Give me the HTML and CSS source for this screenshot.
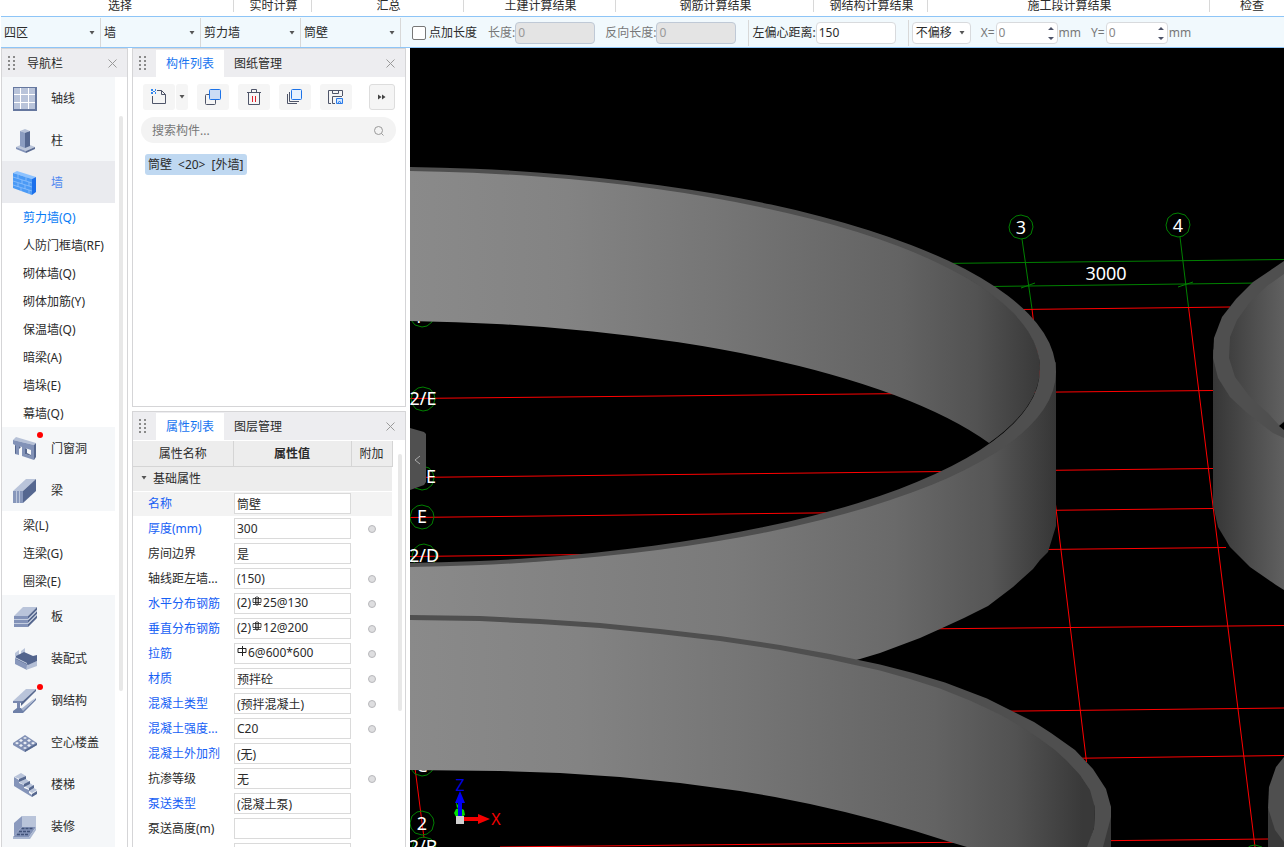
FILE: index.html
```html
<!DOCTYPE html>
<html lang="zh-CN">
<head>
<meta charset="utf-8">
<title>土建计量</title>
<link rel="stylesheet" href="styles.css">
</head>
<body>
<svg class="defs" aria-hidden="true">
  <symbol id="grip" viewBox="0 0 8 15"><path fill="#8a8a8a" d="M0 0h2v2H0zM5 0h2v2H5zM0 4h2v2H0zM5 4h2v2H5zM0 8h2v2H0zM5 8h2v2H5zM0 12h2v2H0zM5 12h2v2H5z"/></symbol>
  <symbol id="close" viewBox="0 0 9 9"><path d="M.5.5l8 8M8.500.5l-8 8" stroke="#999" fill="none"/></symbol>
  <symbol id="caret" viewBox="0 0 6 4"><path fill="#555" d="M.5 0h5L3 3.500z"/></symbol>
  <symbol id="spin" viewBox="0 0 6 14"><path fill="#4c5268" d="M0 4h6L3 1zM0 11h6l-3 3z"/></symbol>
  <symbol id="rebar" viewBox="0 0 10 10"><path d="M1 2.500h8v4H1zM1 8.500h8M3.500 1v7M6.500 1v7M5 0v10" stroke="#222" stroke-width=".8" fill="none"/></symbol>
  <symbol id="stirrup" viewBox="0 0 10 10"><path d="M1 2.500h8v4H1zM5.500 0v10" stroke="#222" fill="none"/></symbol>
</svg>

<header class="ribbon">
  <span>选择</span><span>实时计算</span><span>汇总</span><span>土建计算结果</span><span>钢筋计算结果</span><span>钢结构计算结果</span><span>施工段计算结果</span><span>检查</span>
</header>

<form class="options">
  <label class="pick"><select aria-label="楼层"><option>四区</option></select><svg><use href="#caret"/></svg></label>
  <label class="pick"><select aria-label="构件大类"><option>墙</option></select><svg><use href="#caret"/></svg></label>
  <label class="pick"><select aria-label="构件类型"><option>剪力墙</option></select><svg><use href="#caret"/></svg></label>
  <label class="pick"><select aria-label="构件"><option>筒壁</option></select><svg><use href="#caret"/></svg></label>
  <label class="check"><input type="checkbox">点加长度</label>
  <label class="field muted">长度:<input type="text" value="0" disabled></label>
  <label class="field muted">反向长度:<input type="text" value="0" disabled></label>
  <label class="field split">左偏心距离:<input type="text" value="150"></label>
  <div class="split shift"><label class="pick boxed"><select aria-label="偏移方式"><option>不偏移</option></select><svg><use href="#caret"/></svg></label></div>
  <label class="field num muted">X=<span class="spinner"><input type="number" value="0"><svg><use href="#spin"/></svg></span>mm</label>
  <label class="field num muted">Y=<span class="spinner"><input type="number" value="0"><svg><use href="#spin"/></svg></span>mm</label>
</form>

<main class="work">
  <aside class="panel nav">
    <div class="panel-head"><svg class="grip"><use href="#grip"/></svg><h2>导航栏</h2><button class="close" aria-label="关闭导航栏"><svg><use href="#close"/></svg></button></div>
    <div class="nav-body">
      <nav class="nav-list">
        <a class="group" href="#"><svg viewBox="0 0 24 24"><path fill="#65779f" d="M0 0h24v24H0z"/><path fill="#b9c4da" d="M1 1h21v21H1z"/><path d="M7.500 1v21M15.500 1v21M1 7.500h21M1 15.500h21" stroke="#fff"/></svg>轴线</a>
        <a class="group" href="#"><svg viewBox="0 0 24 24"><path fill="#bcc6da" d="M3 18l9-4 10 4-9 4z"/><path fill="#8494b9" d="M3 18l10 4v2L3 20z"/><path fill="#5b6c93" d="M13 22l9-4v2l-9 4z"/><path fill="#8c9dc1" d="M7 2l5 1v16l-5-2z"/><path fill="#566890" d="M12 3l5-1v15l-5 2z"/><path fill="#b7c2d8" d="M7 2l5-2 5 2-5 2z"/></svg>柱</a>
        <a class="group active" href="#"><svg viewBox="0 0 24 24"><path fill="#8cc2ff" d="M0 2l4-2 19 6-4 2z"/><path fill="#4b9af5" d="M0 2l19 6v16L0 17z"/><path fill="#1c70eb" d="M19 8l4-2v15l-4 3z"/><path d="M0 6l19 6M0 10l19 6M0 14l19 6M5 4v4M13 6v4M9 9v4M16 11v4M5 12v4M12 14v4M8 17v3M16 19v4" stroke="#8fc2fd" fill="none" stroke-width=".8"/></svg>墙</a>
        <a class="sub active" href="#">剪力墙(Q)</a>
        <a class="sub" href="#">人防门框墙(RF)</a>
        <a class="sub" href="#">砌体墙(Q)</a>
        <a class="sub" href="#">砌体加筋(Y)</a>
        <a class="sub" href="#">保温墙(Q)</a>
        <a class="sub" href="#">暗梁(A)</a>
        <a class="sub" href="#">墙垛(E)</a>
        <a class="sub" href="#">幕墙(Q)</a>
        <a class="group" href="#"><svg viewBox="0 0 24 24"><path fill="#b6c1d7" d="M0 3l3-3 20 6-2 2z"/><path fill="#8292b7" fill-rule="evenodd" d="M0 3l21 5v15l-12-4v-9l-3-1v9l-4-1V8L0 7zM12 11v6l6 2v-6z"/><path fill="#56678e" d="M21 8l2-2v14l-2 3zM12 11l2 1v4l4 2v1l-6-2zM6 9l2 1-2 2zM2 8l1 1v8l-1-1z"/></svg>门窗洞<i class="dot"></i></a>
        <a class="group" href="#"><svg viewBox="0 0 24 24"><path fill="#b9c4da" d="M0 12L13 0h10L10 12z"/><path fill="#8797bb" d="M0 12h10v12H0z"/><path fill="#556790" d="M10 12L23 0v12L10 24z"/><path d="M3.500 12v12M6.500 12v12" stroke="#bac5da"/></svg>梁</a>
        <a class="sub" href="#">梁(L)</a>
        <a class="sub" href="#">连梁(G)</a>
        <a class="sub" href="#">圈梁(E)</a>
        <a class="group" href="#"><svg viewBox="0 0 24 24"><path fill="#b9c4da" d="M1 11l9-9h14l-9 9z"/><path fill="#8292b8" d="M1 11h14v3H1zM1 15h14v3H1zM1 19h14v3H1z"/><path fill="#56688f" d="M15 11l9-9v3l-9 9zM15 15l9-9v3l-9 9zM15 19l9-9v3l-9 9z"/><path d="M1 14.500h14l9-9M1 18.500h14l9-9" stroke="#c3cde0" fill="none"/></svg>板</a>
        <a class="group" href="#"><svg viewBox="0 0 24 24"><path fill="#b9c4da" d="M2 6l4-3v5l-4 2zM8 4l4-3v5l-4 2z"/><path fill="#8998bc" d="M2 10l12 5v8L2 17z"/><path fill="#b4bfd6" d="M14 18l10-4v5l-11 4z"/><path fill="#52648d" d="M3 9l8-4 9 4 4-1v6l-9 4-12-6z"/><path d="M2 10.500l12 6" stroke="#c7d0e2" fill="none"/></svg>装配式</a>
        <a class="group" href="#"><svg viewBox="0 0 24 24"><path fill="#b9c4da" d="M0 12L13 0h10L10 12z"/><path fill="#7888af" d="M0 12h10v2H7v6H4v-6H0z"/><path fill="#56688f" d="M10 12L23 0v2L8 17v-3z"/><path fill="#aab7d0" d="M8 20l14-11-12 14z"/><path fill="#6e80a8" d="M0 22l4-3h4l2 3v2H0zM10 22L23 9v2L10 24z"/></svg>钢结构<i class="dot"></i></a>
        <a class="group" href="#"><svg viewBox="0 0 24 24"><path fill="#8190b5" d="M0 12l12-8 12 8v2l-12 7-12-7z"/><path fill="#566990" d="M12 19l12-7v2l-12 7z"/><g fill="#eef1f6"><path d="M10 7l2-1 2 1-2 1zM6 9.500L8 8l2 1.500L8 11zM14 9.500L16 8l2 1.500-2 1.500zM2 12l2-1 2 1-2 1.500zM10 12l2-1.500 2 1.500-2 1.500zM18 12l2-1 2 1-2 1.500zM6 14.500L8 13l2 1.500L8 16zM14 14.500l2-1.500 2 1.500-2 1.500zM10 17l2-1 2 1-2 1z"/></g></svg>空心楼盖</a>
        <a class="group" href="#"><svg viewBox="0 0 24 24"><path fill="#8494b9" d="M1 4l5 3v3l5 2v3l5 2v3l3 2v2L1 13z"/><path fill="#b9c4da" d="M1 4l7-4 5 3-6 3zM6 9l7-3 4 3-6 3zM11 13l6-3 4 3-5 3zM16 18l5-3 3 2-5 3z"/><path fill="#56688f" d="M6 6l7-3v3L6 9zM11 11l6-3v3l-6 3zM16 15l5-3v3l-5 3zM19 21l5-3v3l-5 3z"/></svg>楼梯</a>
        <a class="group" href="#"><svg viewBox="0 0 24 24"><path fill="#8b9abe" d="M1 8l8-7v11l-8 9z"/><path fill="#b9c4da" d="M9 1h14v11H9z"/><path fill="#8292b7" d="M9 12h14l-7 10H0z"/><path d="M8.500 13.500h12M6 16.500h12M4 19.500h12" stroke="#405279" stroke-width="1.500" stroke-dasharray="3 1"/><path fill="#a9b6d0" d="M16 22l7-10v3l-6 9H0v-2z"/></svg>装修</a>
      </nav>
      <div class="thumb nav-thumb"></div>
    </div>
  </aside>

  <div class="docks">
    <section class="panel components">
      <div class="panel-head"><svg class="grip"><use href="#grip"/></svg><button class="tab on">构件列表</button><button class="tab">图纸管理</button><button class="close" aria-label="关闭构件列表"><svg><use href="#close"/></svg></button></div>
      <div class="tools">
        <div class="pair"><button aria-label="新建"><svg viewBox="0 0 16 16"><path d="M6 1.500h4.500l4 4v9h-13V7M10.500 1.500v4h4" fill="none" stroke="#4f5569"/><path fill="#3286ee" d="M0 0h2v2H0zM4 0h1v2H4zM2 2h2v1H2zM0 3h2v2H0zM4 3h1v2H4z"/></svg></button><button class="narrow" aria-label="新建选项"><svg><use href="#caret"/></svg></button></div>
        <button aria-label="复制"><svg viewBox="0 0 16 16"><rect x=".5" y="5.500" width="10" height="10" rx="1" fill="none" stroke="#4f5569"/><rect x="4.500" y=".5" width="11" height="10" rx="1" fill="#cbdcf5" stroke="#1d73e8"/></svg></button>
        <button aria-label="删除"><svg viewBox="0 0 16 16"><path d="M1 3.500h14M5.500 3V.5h5V3M2.500 4v11.500h11V4" fill="none" stroke="#4f5569"/><path d="M6.500 7v6M9.500 7v6" stroke="#e0202a"/></svg></button>
        <button aria-label="层间复制"><svg viewBox="0 0 16 16"><path d="M.5 5v9.500H10M2.500 3v9.500H12" fill="none" stroke="#4f5569"/><rect x="4.500" y=".5" width="10" height="10" rx="1" fill="#e6f1fe" stroke="#1d73e8"/></svg></button>
        <button aria-label="存档"><svg viewBox="0 0 16 16"><path d="M7 14.500H4.500V7.500H14M.5 14.500V1.500h14V7M.5 14.500H3M4.500 1.500v3h6v-3" fill="none" stroke="#4f5569"/><path d="M8.500 9.500h6v5h-6z" fill="#d5e7fd" stroke="#2a7ae8"/><path d="M10 14l1.500-2 1.500 2" fill="none" stroke="#2a7ae8"/></svg></button>
        <button class="more" aria-label="更多"><svg viewBox="0 0 8 6"><path fill="#444" d="M0 .5L3.500 3 0 5.500zM4 .5L7.500 3 4 5.500z"/></svg></button>
      </div>
      <label class="search"><input type="search" placeholder="搜索构件..." aria-label="搜索构件"><svg viewBox="0 0 12 12"><circle cx="5.500" cy="5.500" r="4" fill="none" stroke="#999"/><path d="M8.500 8.500l2 2" stroke="#999"/></svg></label>
      <button class="entry"><span>筒壁</span><span>&lt;20&gt;</span><span>[外墙]</span></button>
    </section>

    <section class="panel props">
      <div class="panel-head"><svg class="grip"><use href="#grip"/></svg><button class="tab on">属性列表</button><button class="tab">图层管理</button><button class="close" aria-label="关闭属性列表"><svg><use href="#close"/></svg></button></div>
      <div class="props-body">
        <table>
          <colgroup><col class="c-name"><col class="c-value"><col class="c-extra"></colgroup>
          <thead><tr><th>属性名称</th><th class="strong">属性值</th><th>附加</th></tr></thead>
          <tbody>
            <tr class="section"><td colspan="3"><svg><use href="#caret"/></svg>基础属性</td></tr>
            <tr class="current"><td class="key"><label for="p1">名称</label></td><td><input id="p1" value="筒壁"></td><td></td></tr>
            <tr><td class="key"><label for="p2">厚度(mm)</label></td><td><input id="p2" value="300"></td><td><input type="checkbox" aria-label="附加厚度"></td></tr>
            <tr><td><label for="p3">房间边界</label></td><td><input id="p3" value="是"></td><td></td></tr>
            <tr><td><label for="p4">轴线距左墙...</label></td><td><input id="p4" value="(150)"></td><td><input type="checkbox" aria-label="附加轴线距"></td></tr>
            <tr><td class="key"><label for="p5">水平分布钢筋</label></td><td><div class="bar">(2)<svg><use href="#rebar"/></svg><input id="p5" value="25@130"></div></td><td><input type="checkbox" aria-label="附加水平分布钢筋"></td></tr>
            <tr><td class="key"><label for="p6">垂直分布钢筋</label></td><td><div class="bar">(2)<svg><use href="#rebar"/></svg><input id="p6" value="12@200"></div></td><td><input type="checkbox" aria-label="附加垂直分布钢筋"></td></tr>
            <tr><td class="key"><label for="p7">拉筋</label></td><td><div class="bar"><svg><use href="#stirrup"/></svg><input id="p7" value="6@600*600"></div></td><td><input type="checkbox" aria-label="附加拉筋"></td></tr>
            <tr><td class="key"><label for="p8">材质</label></td><td><input id="p8" value="预拌砼"></td><td><input type="checkbox" aria-label="附加材质"></td></tr>
            <tr><td class="key"><label for="p9">混凝土类型</label></td><td><input id="p9" value="(预拌混凝土)"></td><td><input type="checkbox" aria-label="附加混凝土类型"></td></tr>
            <tr><td class="key"><label for="p10">混凝土强度...</label></td><td><input id="p10" value="C20"></td><td><input type="checkbox" aria-label="附加混凝土强度"></td></tr>
            <tr><td class="key"><label for="p11">混凝土外加剂</label></td><td><input id="p11" value="(无)"></td><td></td></tr>
            <tr><td><label for="p12">抗渗等级</label></td><td><input id="p12" value="无"></td><td><input type="checkbox" aria-label="附加抗渗等级"></td></tr>
            <tr><td class="key"><label for="p13">泵送类型</label></td><td><input id="p13" value="(混凝土泵)"></td><td></td></tr>
            <tr><td><label for="p14">泵送高度(m)</label></td><td><input id="p14" value=""></td><td></td></tr>
            <tr><td></td><td><input value="" aria-label="属性值"></td><td></td></tr>
          </tbody>
        </table>
        <div class="thumb props-thumb"></div>
      </div>
    </section>
  </div>

  <section class="view" aria-label="三维视图">
    <svg class="scene" viewBox="410 48 874 799" preserveAspectRatio="xMinYMin slice">
      <defs>
        <linearGradient id="inner" gradientUnits="userSpaceOnUse" x1="410" y1="0" x2="1040" y2="0">
          <stop offset="0" stop-color="#8a8a8a"/><stop offset=".25" stop-color="#838383"/><stop offset=".5" stop-color="#757575"/><stop offset=".78" stop-color="#636363"/><stop offset=".9" stop-color="#525252"/><stop offset="1" stop-color="#393939"/>
        </linearGradient>
        <linearGradient id="innerB" href="#inner" gradientTransform="translate(-28 0) scale(1.068 1)"/>
        <linearGradient id="outer" gradientUnits="userSpaceOnUse" x1="410" y1="0" x2="1056" y2="0">
          <stop offset="0" stop-color="#8a8a8a"/><stop offset=".5" stop-color="#7a7a7a"/><stop offset=".75" stop-color="#6a6a6a"/><stop offset=".9" stop-color="#565656"/><stop offset="1" stop-color="#363636"/>
        </linearGradient>
        <linearGradient id="right" gradientUnits="userSpaceOnUse" x1="1213" y1="0" x2="1284" y2="0">
          <stop offset="0" stop-color="#363636"/><stop offset="1" stop-color="#606060"/>
        </linearGradient>
        <path id="bubble" d="M0-12l7 2 4 5 1 5-2 7-5 4-5 1-7-2-4-5-1-5 2-7 5-4z"/>
      </defs>
      <g stroke="#f00" fill="none">
        <path d="M410 398.500L1213 390.500M410 477.500L1213 468.500M410 517.500L1213 508.500M410 556.500L1226 547.500M860 629.500L1284 625.500M980 711.500L1284 708M1060 758.500L1284 755.500M500 847L1268 839M1020 309.500L1230 307M415 768l9 70"/>
        <path d="M1032 309l54.500 453M1188.500 307L1255 847"/>
      </g>
      <g stroke="#008000" fill="none">
        <path d="M940 263.500L1284 259.500M990 286.500L1260 283M1022 239l10 70M1180 237l8.500 70M1021 288l14-5M1178 287l15-5"/>
        <use href="#bubble" x="1021" y="227"/><use href="#bubble" x="1178" y="225"/>
        <use href="#bubble" x="422" y="315"/><use href="#bubble" x="423" y="399"/><use href="#bubble" x="422" y="478"/><use href="#bubble" x="422" y="517"/><use href="#bubble" x="424" y="556"/><use href="#bubble" x="422" y="764"/><use href="#bubble" x="422" y="823"/><use href="#bubble" x="424" y="849"/><use href="#bubble" x="1255" y="857"/>
      </g>
      <g class="marks">
        <text x="1021" y="234">3</text><text x="1178" y="232">4</text><text x="1106" y="280">3000</text>
        <text x="423" y="405">2/E</text><text x="431" y="483">E</text><text x="422" y="523">E</text><text x="424" y="562">2/D</text><text x="422" y="830">2</text><text x="423" y="853">2/B</text><text x="422" y="772">C</text><text x="421" y="323">F</text>
      </g>
      <path fill="url(#inner)" d="M410 170A660 198 0 0 1 1040 369A660 194 0 0 1 989 443A660 198 0 0 0 410 321z"/>
      <path fill="url(#outer)" d="M1056 362V526L1048 552 1040 560 1033 569 1013 587 988 606 964 618 940 629 920 638 880 653 860 659 780 680H410V565A660 194 0 0 0 1040 372z"/>
      <path fill="#4f4f4f" d="M410 167A676 205 0 0 1 1056 372A676 195 0 0 1 410 567V563A660 194 0 0 0 1040 369A660 198 0 0 0 410 171z"/>
      <path fill="url(#innerB)" d="M410 618L540 622 640 630 700 637 780 648 880 668 940 685 1000 710 1040 735 1067 757 1080 771 1092 790 1095 808 1094 828 1088 847H967L950 842 915 831 880 821 845 812 810 804 775 797 740 791 680 783 620 777 560 773 500 771 410 770z"/>
      <path fill="#393939" d="M1111 805V847H1098z"/>
      <path fill="#4f4f4f" d="M410 615L480 616 540 619 600 623 660 629 720 636 780 645 830 654 880 664.500 913 673 945 682.500 987 698.500 1014 712 1034 722 1051 733 1075 750 1093 769 1106 789 1111 807V817L1103 847H1087L1094 828 1095 808 1090 790 1080 775 1067 761 1055 750 1040 739 1020 726 1000 714.500 970 700.500 940 688.500 910 679 880 670.500 830 659.500 780 650 720 641 660 634 600 628 540 624 480 621 410 620z"/>
      <path fill="url(#right)" d="M1213 350V505L1218 527 1230 547 1243 560 1250 567 1276 585 1284 590V300z"/>
      <path fill="#4f4f4f" d="M1284 261L1253 282 1236 299 1222 317 1214 338 1213 358 1218 378 1230 397 1247 413 1273 433 1284 438z"/>
      <path fill="url(#right)" d="M1284 274L1267 286 1250 302 1237 320 1230 337 1229 358 1235 377 1250 397 1268 413 1279 425 1284 421z"/>
      <path fill="#000" d="M1279 426l5-4v8z"/>
      <path fill="#393939" d="M1268 808V847h16v-12z"/>
      <path fill="#4f4f4f" d="M1284 757L1276 767 1269 787 1268 808 1275 830 1284 842z"/>
      <g class="axes">
        <path fill="#00e000" d="M454 813l2-4 4-1 4 2 1 5-4 2h-5zM456 802l3 5-2 1z"/>
        <path fill="#0000f5" d="M458 816V803h-3l5-12 5 12h-3v13z"/>
        <path fill="#f50000" d="M463 817h15v-3l12 5-12 5v-3h-15z"/>
        <path fill="#d0d0d0" d="M456 816h8v8h-8z"/>
        <text x="460" y="791" fill="#0000e0">Z</text><text x="496" y="825" fill="#f50000">X</text>
      </g>
    </svg>
    <button class="collapse" aria-label="收起面板"><svg viewBox="0 0 16 62"><path fill="#505050" d="M0 0l14 4 2 2v48l-2 3-14 5z"/><path d="M10 28l-5 4 5 4" fill="none" stroke="#aaa"/></svg></button>
  </section>
</main>
</body>
</html>
```
FILE: styles.css
```css
* { box-sizing: border-box; }

body {
  margin: 0;
  height: 100vh;
  display: flex;
  flex-direction: column;
  overflow: hidden;
  background: #fff;
  color: #2b2b2b;
  font: 12px/16px "Noto Sans", "Noto Sans CJK SC", sans-serif;
}

input, select, button { font: inherit; color: inherit; margin: 0; padding: 0; border: 0; background: none; }
button { cursor: pointer; }
select, input { appearance: none; min-width: 0; outline: none; }
a { color: inherit; text-decoration: none; }
svg { display: block; flex: none; }
.defs { position: absolute; width: 0; height: 0; }

/* ribbon group captions */
.ribbon {
  flex: none;
  height: 16px;
  display: grid;
  grid-template-columns: 234fr 78fr 152fr 152fr 198fr 114fr 282fr 74fr;
}
.ribbon span {
  height: 12px;
  padding-left: 2px;
  border-right: 1px solid #d8d8d8;
  display: flex;
  align-items: center;
  justify-content: center;
  line-height: 12px;
  white-space: nowrap;
}
.ribbon span:first-child { padding-left: 7px; }
.ribbon span:last-child { border: 0; justify-content: flex-start; padding-left: 30px; }

/* option bar */
.options {
  flex: none;
  height: 32px;
  margin-left: 1px;
  padding-top: 1px;
  display: flex;
  align-items: center;
  background: #f1f9fd;
  border-top: 1px solid #8ec5f7;
  border-bottom: 1px solid #8ec5f7;
  white-space: nowrap;
}
.pick { position: relative; width: 100px; height: 29px; border-right: 1px solid #d8d8d8; display: flex; }
.pick select { width: 100%; padding: 0 16px 0 3px; }
.pick svg { position: absolute; right: 5px; top: 50%; width: 6px; height: 4px; margin-top: -2px; pointer-events: none; }
.check { display: flex; align-items: center; gap: 3px; margin: 0 11px; }
.check input { width: 14px; height: 14px; border: 1px solid #777; border-radius: 2px; background: #fff; }
.field { display: flex; align-items: center; margin-right: 10px; }
.field input { width: 80px; height: 22px; padding: 0 2px; border: 1px solid #d8dadd; border-radius: 4px; background: #fff; }
.field input:disabled { background: #e4e4e4; border-color: #bfc9d6; color: #999; }
.muted { color: #777; }
.split { border-left: 1px solid #d8d8d8; height: 26px; padding-left: 3px; margin-left: 2px; }
.shift { display: flex; align-items: center; margin-right: 10px; }
.pick.boxed { width: 59px; height: 22px; border: 1px solid #d8dadd; border-radius: 4px; background: #fff; }
.num { gap: 1px; }
.num input { width: 62px; color: #888; }
.num input::-webkit-inner-spin-button { appearance: none; }
.spinner { position: relative; }
.spinner svg { position: absolute; right: 4px; top: 4px; width: 6px; height: 14px; pointer-events: none; }

/* work area */
.work { flex: 1; min-height: 0; display: flex; padding-left: 1px; }
.panel { border: 1px solid #d5d5d7; background: #fff; overflow: hidden; }
.panel-head { height: 28px; padding: 1px 9px 0 6px; display: flex; align-items: center; background: #ededf0; }
.panel-head h2 { margin: 0 0 0 11px; font-size: 12px; font-weight: 400; }
.grip { width: 8px; height: 15px; }
.close { margin-left: auto; width: 11px; height: 20px; display: grid; place-items: center; }
.close svg { width: 9px; height: 9px; }
.tab { align-self: stretch; width: 68px; }
.tab.on { margin-left: 9px; background: #fff; color: #1674f0; }

.nav { flex: none; width: 127px; border-bottom: 0; }
.nav-body { display: flex; gap: 4px; }
.nav-list { flex: none; width: 113px; }
.group { position: relative; height: 42px; padding: 1px 0 0 11px; display: flex; align-items: center; gap: 14px; background: #f5f7f9; }
.group svg { width: 24px; height: 24px; }
.group.active { background: #eaebef; color: #4d86f0; }
.dot { position: absolute; left: 35px; top: 5px; width: 6px; height: 6px; border-radius: 50%; background: #f00; }
.sub { height: 28px; padding: 2px 0 0 21px; display: flex; align-items: center; white-space: nowrap; }
.sub.active { color: #087bf5; }
.thumb { width: 4px; border-radius: 2px; background: #e8e8e8; }
.nav-thumb { height: 575px; margin-top: 39px; }

.docks { flex: none; width: 274px; margin: 0 4px; display: flex; flex-direction: column; gap: 4px; }
.components { flex: none; height: 359px; }
.props { flex: 1; min-height: 0; border-bottom: 0; }

.tools { display: flex; gap: 9px; padding: 7px 10px; }
.tools button { width: 32px; height: 26px; border-radius: 3px; background: #f5f5f5; display: grid; place-items: center; }
.tools svg { width: 16px; height: 16px; }
.pair { display: flex; gap: 1px; }
.tools .narrow { width: 12px; }
.tools .narrow svg { width: 6px; height: 4px; }
.tools .more { width: 26px; margin-left: auto; border: 1px solid #ddd; }
.tools .more svg { width: 8px; height: 6px; }

.search { height: 26px; margin: 0 9px 0 8px; padding: 1px 11px 0; display: flex; align-items: center; border-radius: 13px; background: #f3f3f3; }
.search input { flex: 1; }
.search input::placeholder { color: #777; opacity: 1; }
.search svg { width: 12px; height: 12px; }
.entry { display: flex; align-items: center; gap: 6px; height: 21px; margin: 11px 0 0 12px; padding: 0 4px 0 3px; border-radius: 3px; background: #bfd8f1; }

.props-body { display: flex; gap: 5px; padding-top: 1px; }
table { width: 259px; table-layout: fixed; border-collapse: collapse; }
.c-name { width: 100px; }
.c-value { width: 118px; }
.c-extra { width: 41px; }
th { height: 25px; padding: 2px 0 0; background: #ededed; border-right: 1px solid #d5d5d5; border-bottom: 1px solid #d5d5d5; font-weight: 400; }
th.strong { font-weight: 700; }
td { height: 25px; padding: 0; white-space: nowrap; }
td:first-child { padding-left: 15px; }
td:nth-child(3) { text-align: center; }
.section td { background: #ededed; border-bottom: 1px solid #fff; }
.section td:first-child { padding-left: 20px; }
.section svg { float: left; width: 6px; height: 4px; margin: 5px 6px 0 -12px; }
.current td { background: #f3f3f3; }
.key { color: #1660f5; }
td input, .bar { display: block; width: 117px; height: 21px; margin-left: 1px; padding: 0 2px; border: 1px solid #dadada; background: #fff; }
.bar { display: flex; gap: 1px; line-height: 18px; }
.bar svg { width: 10px; height: 10px; margin-top: 2px; }
.bar input { flex: 1; width: auto; height: 18px; margin: 0; padding: 0; border: 0; }
td input[type="checkbox"] { width: 8px; height: 8px; margin: 0 auto; padding: 0; border: 1px solid #b8b8bb; border-radius: 50%; background: #dedee0; }
.props-thumb { height: 257px; margin-top: 13px; }

/* 3D view */
.view { position: relative; flex: 1; min-width: 0; background: #000; overflow: hidden; }
.scene { width: 100%; height: 100%; }
.marks text { font-size: 18px; fill: #fff; text-anchor: middle; }
.axes text { font-size: 16px; text-anchor: middle; }
.collapse { position: absolute; left: 0; top: 380px; width: 16px; height: 62px; }
.collapse svg { width: 16px; height: 62px; }
```
